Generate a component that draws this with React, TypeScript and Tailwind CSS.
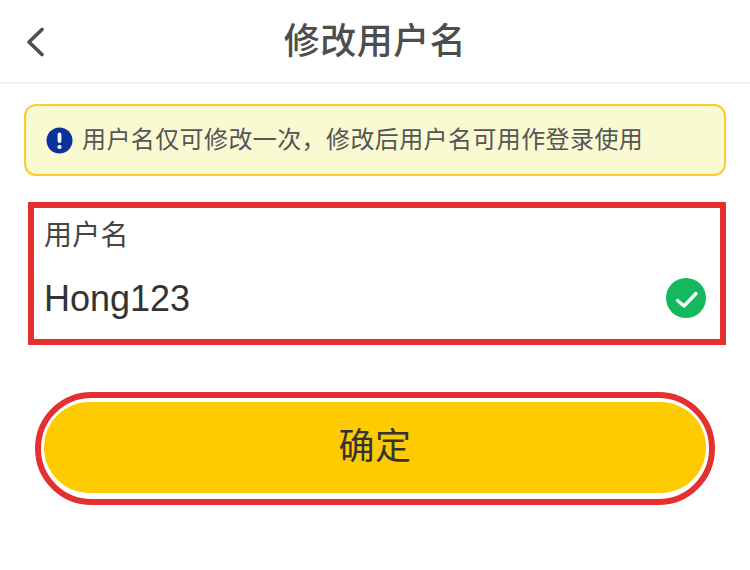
import React from 'react';

const cjk = "font-['Liberation_Sans','Noto_Sans_CJK_SC',sans-serif]";

const App: React.FC = () => {
  return (
    <div className={`w-[750px] h-[570px] bg-white overflow-hidden ${cjk}`}>
      {/* header */}
      <header className="h-[84px] border-b-2 border-[#f2f2f2] flex items-center justify-center relative">
        <svg className="absolute left-[25px] top-[27px]" width="20" height="30" viewBox="0 0 20 30" fill="none">
          <path d="M17 2.5 L4 15 L17 27.5" stroke="#4d4d4d" strokeWidth="3.6" strokeLinecap="round" strokeLinejoin="round" />
        </svg>
        <h1 className="text-[36px] leading-none font-medium text-[#4d4d4d] tracking-[0.5px] pt-[2px]">修改用户名</h1>
      </header>

      {/* notice */}
      <div className="mt-5 mx-6 h-[72px] rounded-[12px] border-2 border-[#fccb2e] bg-[#fafad2] flex items-center pl-5 gap-[9px]">
        <svg width="27" height="27" viewBox="0 0 27 27" className="shrink-0">
          <circle cx="13.5" cy="13.5" r="13" fill="#0a3299" />
          <rect x="11.6" y="5.5" width="3.8" height="10.5" rx="1.9" fill="#fff" />
          <circle cx="13.5" cy="20" r="2.1" fill="#fff" />
        </svg>
        <span className="text-[24px] leading-none text-[#555555] tracking-[0.4px]">用户名仅可修改一次，修改后用户名可用作登录使用</span>
      </div>

      {/* field */}
      <div className="mt-[26px] ml-7 w-[698px] h-[143px] border-[6px] border-[#e53030] pl-[10px] pr-[14px] pt-[9px]">
        <div className="text-[28px] leading-[38px] text-[#444444] tracking-[0.3px]">用户名</div>
        <div className="mt-[24px] h-[40px] flex items-center justify-between">
          <span className="text-[36px] leading-[40px] text-[#333333]">Hong123</span>
          <svg width="40" height="40" viewBox="0 0 40 40" className="shrink-0 -translate-y-[1px]">
            <circle cx="20" cy="20" r="20" fill="#14b85f" />
            <path d="M11.5 22.5 L18 28 L30 15.5" fill="none" stroke="#fff" strokeWidth="3.4" strokeLinecap="round" strokeLinejoin="round" />
          </svg>
        </div>
      </div>

      {/* button */}
      <div className="mt-[47px] ml-[35px] w-[680px] h-[113px] rounded-full border-[6px] border-[#e53030] flex justify-center pt-[4px]">
        <button className="w-[662px] h-[91px] rounded-full bg-[#fdcb00] text-[36px] leading-none text-[#333333] tracking-[0.5px] pb-[2px]">确定</button>
      </div>
    </div>
  );
};

export default App;
